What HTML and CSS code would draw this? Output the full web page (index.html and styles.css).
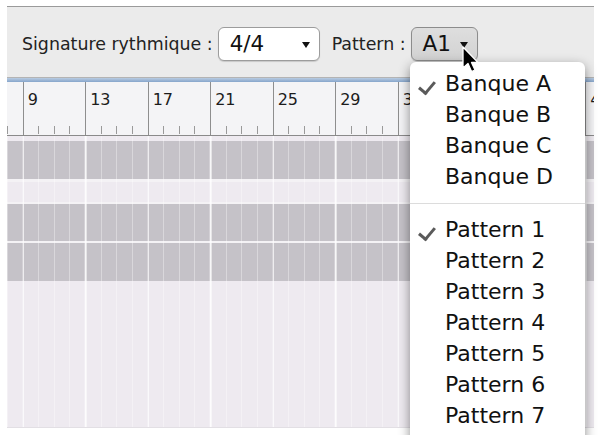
FILE: index.html
```html
<!DOCTYPE html>
<html lang="fr">
<head>
    <meta charset="UTF-8">
    <meta name="viewport" content="width=device-width, initial-scale=1.0">
    <title>Pattern</title>
    <link rel="stylesheet" href="styles.css">
</head>
<body>
    <div class="window">
        <!-- Barre d'outils -->
        <div class="toolbar">
            <span class="label">Signature rythmique :</span>
            <div class="select select-sig">
                <span class="value">4/4</span>
                <span class="arrow"></span>
            </div>
            <span class="label label-pattern">Pattern :</span>
            <div class="select select-pattern">
                <span class="value">A1</span>
                <span class="arrow"></span>
            </div>
        </div>
        <div class="blue-line"></div>

        <!-- Règle des mesures -->
        <div class="ruler">
            <div class="bar">9</div>
            <div class="bar">13</div>
            <div class="bar">17</div>
            <div class="bar">21</div>
            <div class="bar">25</div>
            <div class="bar">29</div>
            <div class="bar">33</div>
            <div class="bar">37</div>
            <div class="bar">41</div>
            <div class="bar">45</div>
        </div>

        <!-- Pistes -->
        <div class="tracks">
            <div class="row light" style="height: 5px"></div>
            <div class="row dark" style="height: 38px"></div>
            <div class="row line" style="height: 3px"></div>
            <div class="row light" style="height: 20px"></div>
            <div class="row line" style="height: 2px"></div>
            <div class="row dark" style="height: 37px"></div>
            <div class="row line" style="height: 2px"></div>
            <div class="row dark" style="height: 38px"></div>
            <div class="row light grow"></div>
        </div>
    </div>

    <!-- Menu déroulant ouvert -->
    <div class="menu">
        <div class="item checked">Banque A</div>
        <div class="item">Banque B</div>
        <div class="item">Banque C</div>
        <div class="item">Banque D</div>
        <div class="separator"></div>
        <div class="item checked">Pattern 1</div>
        <div class="item">Pattern 2</div>
        <div class="item">Pattern 3</div>
        <div class="item">Pattern 4</div>
        <div class="item">Pattern 5</div>
        <div class="item">Pattern 6</div>
        <div class="item">Pattern 7</div>
    </div>

    <!-- Curseur -->
    <svg class="cursor" width="18" height="28" viewBox="0 0 18 28">
        <path d="M1 1 L1 22 L6 17.5 L9.5 25.5 L13 24 L9.5 16.5 L16 16.5 Z" fill="#000" stroke="#fff" stroke-width="1.3" stroke-linejoin="round"/>
    </svg>
</body>
</html>
```

FILE: styles.css
```css
* {
    margin: 0;
    padding: 0;
    box-sizing: border-box;
}
body {
    font-family: 'DejaVu Sans', 'Lucida Grande', sans-serif;
    background: #fff;
    width: 601px;
    height: 435px;
    overflow: hidden;
    position: relative;
}
.window {
    margin: 6px 7px 0 7px;
    width: 587px;
    height: 422px;
    border-top: 1px solid #9a9a9a;
    display: flex;
    flex-direction: column;
    overflow: hidden;
}
/* Barre d'outils */
.toolbar {
    height: 71px;
    flex: none;
    background: #ebebeb;
    display: flex;
    align-items: center;
    padding: 3px 0 0 15px;
    border-bottom: 1px solid #b4b4b4;
}
.label {
    font-size: 17.4px;
    color: #222;
    margin-right: 5px;
}
.label-pattern {
    margin-left: 12px;
}
.select {
    height: 34px;
    border: 1px solid #9c9c9c;
    border-radius: 6px;
    display: flex;
    align-items: center;
    justify-content: space-between;
    padding: 0 9px 0 11px;
    box-shadow: 0 1px 1px rgba(0, 0, 0, 0.15);
}
.select .value {
    font-size: 21.5px;
    color: #111;
}
.select .arrow {
    width: 0;
    height: 0;
    border-left: 4px solid transparent;
    border-right: 4px solid transparent;
    border-top: 6px solid #111;
    margin-top: 2px;
}
.select-sig {
    width: 102px;
    background: #fff;
}
.select-pattern {
    width: 67px;
    background: linear-gradient(#dedede, #d2d2d2);
    border-color: #8c8c8c;
}
.blue-line {
    height: 4px;
    flex: none;
    background: linear-gradient(#b9cce2, #86a5cb);
}
/* Règle */
.ruler {
    height: 54px;
    flex: none;
    display: flex;
    padding-left: 15.7px;
    background-color: #f4f4f6;
    background-image: repeating-linear-gradient(to right, #9a9a9a 0 1px, transparent 1px 15.625px);
    background-size: 100% 8px;
    background-position: 0 44px;
    background-repeat: no-repeat;
    border-bottom: 1px solid #8a8a8a;
}
.bar {
    width: 62.5px;
    flex: none;
    border-left: 1px solid #8e8e8e;
    font-size: 16px;
    line-height: 16px;
    padding: 10px 0 0 4px;
    color: #1c1c1c;
}
/* Pistes */
.tracks {
    flex: 1;
    display: flex;
    flex-direction: column;
    border-bottom: 1px solid #e2dfe4;
}
.row {
    flex: none;
    background-image:
        repeating-linear-gradient(to right, rgba(255, 255, 255, 0.8) 0 1.5px, transparent 1.5px 62.5px),
        repeating-linear-gradient(to right, rgba(255, 255, 255, 0.35) 0 1px, transparent 1px 15.625px);
    background-position: 15.7px 0, 0 0;
}
.row.dark {
    background-color: #c5c2c8;
}
.row.light {
    background-color: #eeeaf0;
}
.row.line {
    background-color: #f4f2f5;
}
.row.grow {
    flex: 1;
}
/* Menu */
.menu {
    position: absolute;
    left: 410px;
    top: 62px;
    width: 175px;
    height: 390px;
    background: #fff;
    border-radius: 6px 6px 0 0;
    box-shadow: 0 4px 12px rgba(0, 0, 0, 0.45);
    padding-top: 6px;
}
.item {
    font-size: 22px;
    line-height: 31px;
    color: #111;
    padding-left: 35px;
    position: relative;
}
.item.checked::before {
    content: "";
    position: absolute;
    left: 12px;
    top: 10px;
    width: 7px;
    height: 13px;
    border-right: 3px solid #5a5a5a;
    border-bottom: 3px solid #5a5a5a;
    transform: rotate(40deg);
}
.separator {
    height: 1px;
    background: #dcdcdc;
    margin: 11px 0 10px;
}
.cursor {
    position: absolute;
    left: 462px;
    top: 46px;
}
```
